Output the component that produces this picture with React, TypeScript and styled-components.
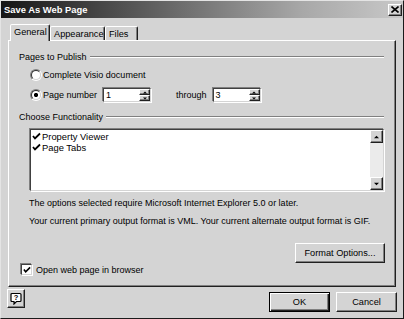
import React from "react";
import styled, { createGlobalStyle, css } from "styled-components";

const GlobalStyle = createGlobalStyle`
  html, body {
    margin: 0;
    padding: 0;
    background: #ffffff;
  }
  * {
    box-sizing: border-box;
  }
`;

// classic 3D edges
const raised = css`
  border: 1px solid;
  border-color: #ffffff #202020 #202020 #ffffff;
  box-shadow: inset -1px -1px 0 #808080;
`;

const sunken = css`
  border: 1px solid;
  border-color: #404040 #d4d4d4 #d4d4d4 #404040;
  box-shadow: -1px -1px 0 #808080, 1px 1px 0 #ffffff;
`;

const Window = styled.div`
  width: 404px;
  height: 319px;
  background: #d4d4d4;
  border: 1px solid;
  border-color: #e4e4e4 #1a1a1a #1a1a1a #e4e4e4;
  display: flex;
  flex-direction: column;
  font-family: "Liberation Sans", Arial, sans-serif;
  font-size: 9px;
  color: #000;
`;

const TitleBar = styled.div`
  height: 17px;
  display: flex;
  align-items: center;
  padding: 0 1px 0 3px;
  background: linear-gradient(to right, #161616 0%, #5a5a5a 35%, #a8a8a8 75%, #c8c8c8 100%);
`;

const Title = styled.div`
  flex: 1;
  color: #ffffff;
  font-weight: bold;
  font-size: 9.4px;
`;

const CloseButton = styled.div`
  ${raised};
  width: 14px;
  height: 12px;
  background: #d4d4d4;
  display: flex;
  align-items: center;
  justify-content: center;
`;

const Content = styled.div`
  flex: 1;
  display: flex;
  flex-direction: column;
  padding: 6px 7px 0 7px;
`;

const TabStrip = styled.div`
  height: 16px;
  display: flex;
  align-items: flex-end;
  padding-left: 2px;
  position: relative;
  z-index: 1;
`;

const Tab = styled.div<{ $active?: boolean; $width: number }>`
  width: ${(p) => p.$width}px;
  height: ${(p) => (p.$active ? 17 : 14)}px;
  margin-bottom: ${(p) => (p.$active ? -1 : 0)}px;
  background: #d4d4d4;
  border: 1px solid;
  border-bottom: none;
  border-color: #ffffff #202020 transparent #ffffff;
  box-shadow: inset -1px 0 0 #808080;
  border-radius: 2px 2px 0 0;
  display: flex;
  align-items: center;
  padding: ${(p) => (p.$active ? "0 0 2px 3px" : "0 0 0 3px")};
  font-size: 9.2px;
`;

const Panel = styled.div`
  height: 247px;
  background: #d4d4d4;
  border: 1px solid;
  border-color: #ffffff #202020 #202020 #ffffff;
  box-shadow: inset -1px -1px 0 #808080;
  padding: 10px 10px 0 10px;
  display: flex;
  flex-direction: column;
`;

const GroupHeader = styled.div<{ $top?: number }>`
  height: 12px;
  margin-top: ${(p) => p.$top ?? 0}px;
  display: flex;
  align-items: center;
  gap: 3px;
`;

const EtchedLine = styled.div`
  flex: 1;
  height: 2px;
  border-top: 1px solid #808080;
  border-bottom: 1px solid #ffffff;
  margin-right: 1px;
`;

const OptionRow = styled.div<{ $indent: number; $top: number }>`
  height: 16px;
  margin-top: ${(p) => p.$top}px;
  margin-left: ${(p) => p.$indent}px;
  display: flex;
  align-items: center;
`;

const Radio = styled.div<{ $checked?: boolean }>`
  width: 12px;
  height: 12px;
  border-radius: 50%;
  border: 1px solid;
  border-color: #808080 #ffffff #ffffff #808080;
  margin-right: 1px;
  display: flex;
  align-items: center;
  justify-content: center;
  &::before {
    content: "";
    width: 10px;
    height: 10px;
    border-radius: 50%;
    box-sizing: border-box;
    border: 1px solid;
    border-color: #303030 #d4d4d4 #d4d4d4 #303030;
    background: ${(p) =>
      p.$checked
        ? "radial-gradient(circle, #000 0 1.9px, #fff 2.3px)"
        : "#ffffff"};
  }
`;

const Label = styled.span<{ $gap?: number; $lead?: number }>`
  margin-right: ${(p) => p.$gap ?? 0}px;
  margin-left: ${(p) => p.$lead ?? 0}px;
  white-space: nowrap;
`;

const SpinBox = styled.div`
  ${sunken};
  width: 48px;
  height: 14px;
  background: #ffffff;
  display: flex;
`;

const SpinValue = styled.div`
  flex: 1;
  padding-left: 2px;
  line-height: 12px;
`;

const SpinButtons = styled.div`
  width: 11px;
  display: flex;
  flex-direction: column;
`;

const SpinButton = styled.div`
  ${raised};
  flex: 1;
  background: #d4d4d4;
  display: flex;
  align-items: center;
  justify-content: center;
`;

const ListBox = styled.div`
  ${sunken};
  margin: 6px 1px 0 11px;
  height: 62px;
  background: #ffffff;
  display: flex;
`;

const ListItems = styled.div`
  flex: 1;
  padding: 1px 0 0 1px;
`;

const ListItem = styled.div`
  height: 11px;
  display: flex;
  align-items: center;
  gap: 1px;
  font-size: 9.4px;
`;

const ScrollBar = styled.div`
  width: 13px;
  display: flex;
  flex-direction: column;
  justify-content: space-between;
  background: #ebebeb;
`;

const ScrollButton = styled.div`
  ${raised};
  height: 13px;
  background: #d4d4d4;
  display: flex;
  align-items: center;
  justify-content: center;
`;

const Note = styled.div<{ $top: number }>`
  margin: ${(p) => p.$top}px 0 0 10px;
  height: 12px;
  line-height: 12px;
  white-space: nowrap;
`;

const ButtonRow = styled.div`
  display: flex;
  justify-content: flex-end;
  margin-top: 16px;
`;

const Button = styled.div<{ $width: number; $default?: boolean; $edge?: number }>`
  width: ${(p) => p.$width}px;
  height: 20px;
  margin-right: ${(p) => p.$edge ?? 0}px;
  background: #d4d4d4;
  display: flex;
  align-items: center;
  justify-content: center;
  font-size: 9.2px;
  border: 1px solid;
  border-color: #ffffff #202020 #202020 #ffffff;
  box-shadow: inset -1px -1px 0 #808080;
  ${(p) =>
    p.$default &&
    css`
      border: 1px solid #000;
      box-shadow: inset 1px 1px 0 #ffffff, inset -1px -1px 0 #202020,
        inset -2px -2px 0 #808080;
    `}
`;

const CheckRow = styled.div`
  height: 13px;
  margin-left: 1px;
  display: flex;
  align-items: center;
  gap: 4px;
`;

const CheckBox = styled.div`
  ${sunken};
  width: 11px;
  height: 11px;
  margin-left: 1px;
  background: #ffffff;
  display: flex;
  align-items: center;
  justify-content: center;
`;

const Footer = styled.div`
  display: flex;
  align-items: flex-start;
  margin-top: 5px;
  gap: 6px;
`;

const HelpButton = styled.div`
  ${raised};
  width: 18px;
  height: 19px;
  margin: -3px 0 0 -1px;
  background: #d4d4d4;
  display: flex;
  align-items: center;
  justify-content: center;
`;

const Spacer = styled.div`
  flex: 1;
`;

const Check = ({ size = 9 }: { size?: number }) => (
  <svg width={size} height={size} viewBox="0 0 9 9">
    <polyline points="1,4 3,6.5 8,1.5" fill="none" stroke="#000" strokeWidth="1.8" />
  </svg>
);

const Arrow = ({ up, size = 5 }: { up?: boolean; size?: number }) => (
  <svg width={size} height={Math.ceil(size / 2) + 1} viewBox="0 0 6 4">
    <polygon points={up ? "0,3.5 6,3.5 3,0.5" : "0,0.5 6,0.5 3,3.5"} fill="#000" />
  </svg>
);

const Spinner = ({ value }: { value: string }) => (
  <SpinBox>
    <SpinValue>{value}</SpinValue>
    <SpinButtons>
      <SpinButton>
        <Arrow up size={4} />
      </SpinButton>
      <SpinButton>
        <Arrow size={4} />
      </SpinButton>
    </SpinButtons>
  </SpinBox>
);

export default function App() {
  return (
    <>
      <GlobalStyle />
      <Window>
        <TitleBar>
          <Title>Save As Web Page</Title>
          <CloseButton>
            <svg width="8" height="7" viewBox="0 0 8 7">
              <path d="M0.5 0.5 L7.5 6.5 M7.5 0.5 L0.5 6.5" stroke="#000" strokeWidth="1.6" />
            </svg>
          </CloseButton>
        </TitleBar>
        <Content>
          <TabStrip>
            <Tab $active $width={40}>General</Tab>
            <Tab $width={55}>Appearance</Tab>
            <Tab $width={33}>Files</Tab>
          </TabStrip>
          <Panel>
            <GroupHeader>
              Pages to Publish
              <EtchedLine />
            </GroupHeader>
            <OptionRow $indent={11} $top={4}>
              <Radio />
              <Label>Complete Visio document</Label>
            </OptionRow>
            <OptionRow $indent={11} $top={4}>
              <Radio $checked />
              <Label $gap={6}>Page number</Label>
              <Spinner value="1" />
              <Label $gap={6} $lead={25}>
                through
              </Label>
              <Spinner value="3" />
            </OptionRow>
            <GroupHeader $top={8}>
              Choose Functionality
              <EtchedLine />
            </GroupHeader>
            <ListBox>
              <ListItems>
                <ListItem>
                  <Check />
                  Property Viewer
                </ListItem>
                <ListItem>
                  <Check />
                  Page Tabs
                </ListItem>
              </ListItems>
              <ScrollBar>
                <ScrollButton>
                  <Arrow up />
                </ScrollButton>
                <ScrollButton>
                  <Arrow />
                </ScrollButton>
              </ScrollBar>
            </ListBox>
            <Note $top={6}>The options selected require Microsoft Internet Explorer 5.0 or later.</Note>
            <Note $top={6}>
              Your current primary output format is VML. Your current alternate output format is GIF.
            </Note>
            <ButtonRow>
              <Button $width={90}>Format Options...</Button>
            </ButtonRow>
            <CheckRow>
              <CheckBox>
                <Check size={8} />
              </CheckBox>
              <Label>Open web page in browser</Label>
            </CheckRow>
          </Panel>
          <Footer>
            <HelpButton>
              <svg width="12" height="13" viewBox="0 0 12 13">
                <path
                  d="M2 1.5 H10 Q11 1.5 11 2.5 V8.5 Q11 9.5 10 9.5 H6.5 L4 12 V9.5 H2 Q1 9.5 1 8.5 V2.5 Q1 1.5 2 1.5 Z"
                  fill="#fff"
                  stroke="#000"
                  strokeWidth="1.2"
                />
                <text x="6" y="8.3" fontSize="7.5" fontWeight="bold" textAnchor="middle" fontFamily="Liberation Sans, Arial, sans-serif">
                  ?
                </text>
              </svg>
            </HelpButton>
            <Spacer />
            <Button $width={61} $default>
              OK
            </Button>
            <Button $width={61} $edge={-1}>
              Cancel
            </Button>
          </Footer>
        </Content>
      </Window>
    </>
  );
}
